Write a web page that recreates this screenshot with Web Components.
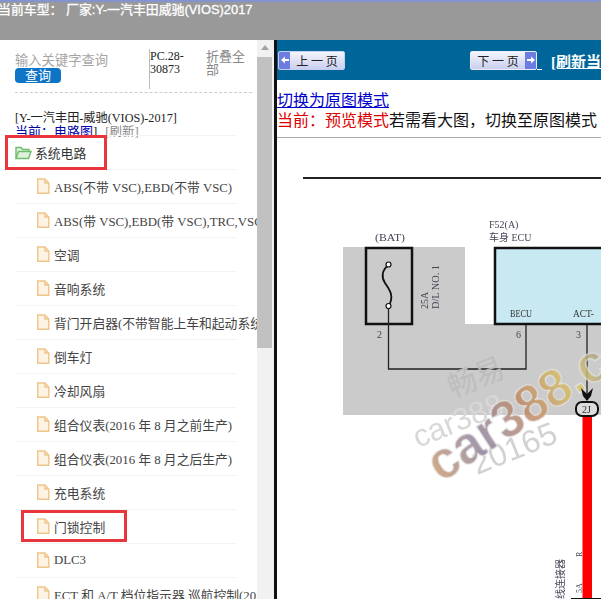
<!DOCTYPE html>
<html lang="zh"><head><meta charset="utf-8"><title>车型</title>
<style>
html,body{margin:0;padding:0;height:599px;overflow:hidden;background:#fff}
body{font:13px "Liberation Serif","Noto Sans CJK SC",serif}
</style></head><body>
<app-shell>
  <top-bar slot="top">当前车型： 厂家:Y-一汽丰田威驰(VIOS)2017</top-bar>
  <side-panel slot="side"></side-panel>
  <doc-view slot="main"></doc-view>
</app-shell>
<script>
const FILE=`<svg width="14" height="17" viewBox="0 0 14 17" fill="#fdf3e2" stroke="#f0c48c" stroke-width="1.4"><path d="M1.7 1h7.2l3.900 4v10.300H1.700z"/><path d="M8.900 1v4h3.900" fill="none"/></svg>`;
const FOLDER=`<svg width="17" height="15" viewBox="0 0 17 15" fill="none" stroke="#6fbb6c" stroke-width="1.4"><path d="M1 13V2.500h5l1.500 2H14V6.500" fill="#e3f3e0"/><path d="M1 13.500 3.500 6.500H16l-2.500 7z" fill="#dff1dc"/></svg>`;
function def(name,html,init){customElements.define(name,class extends HTMLElement{constructor(){super();this.attachShadow({mode:'open'}).innerHTML=html}connectedCallback(){init&&init(this)}})}

def('app-shell',`<style>
:host{display:grid;grid-template-columns:274px 327px;grid-template-rows:40px 559px;width:601px;height:599px;overflow:hidden}
.t{grid-column:1/3;min-width:0}.s,.m{min-width:0;min-height:0;overflow:hidden}
</style><div class="t"><slot name="top"></slot></div><div class="s"><slot name="side"></slot></div><div class="m"><slot name="main"></slot></div>`);

def('top-bar',`<style>
:host{display:block;height:40px;box-sizing:border-box;background:#999;border-top:2px solid #8492cf;color:#fff;font:12.9px/16px "Liberation Sans","Noto Sans CJK SC",sans-serif;white-space:nowrap;overflow:hidden}
span{display:block;margin-left:-2px;-webkit-text-stroke:.3px #fff}
</style><span><slot></slot></span>`);

def('tree-row',`<style>
:host{display:flex;align-items:center;gap:4px;height:34px;box-sizing:border-box;margin-left:16px;width:221px;padding-left:20px;border-bottom:1px solid #f4f4f4;color:#444;font-size:12.8px;white-space:nowrap}
:host([root]){padding:0 0 1px;height:35px;margin-left:15px;width:222px;color:#333;gap:3px;border-top:1px solid #f4f4f4}
.i{display:flex;flex:none}
</style><span class="i"></span><span class="l"><slot></slot></span>`,el=>{el.shadowRoot.querySelector('.i').innerHTML=el.hasAttribute('root')?FOLDER:FILE});

def('mark-box',`<style>
:host{display:block;position:absolute;border:3px solid #e8363c;box-sizing:border-box;pointer-events:none}
</style>`);

def('side-panel',`<style>
:host{display:flex;height:559px;background:#fff;overflow:hidden}
.c{width:257px;flex:none;overflow:hidden}
.head{display:grid;grid-template-columns:134px 57px 50px;margin:9px 0 0 15px;width:237px;border-bottom:1px dashed #ccc;box-sizing:border-box;height:44px;color:#888}
.q{font-size:13.3px;line-height:18px;padding-top:3px;color:#a5a5a5}
.btn{display:block;width:46px;height:15px;line-height:15px;background:#0d74c6;color:#fff;border-radius:4px;text-align:center;font-size:13px;margin-top:-2px}
.pc{border-left:1px solid #bbb;color:#222;font-size:12px;line-height:13px;height:40px;box-sizing:border-box;padding-top:1px}
.fold{font-size:13px;line-height:13px;color:#888;padding:1px 0 0 0}
.info{margin:19px 0 0 15px;font-size:12.2px;line-height:13px;color:#222;white-space:nowrap;height:23px}
.l2{font-size:13px}
.info a{color:#00a;text-decoration:underline}
.info i{font-style:normal;color:#888;margin-left:8px;font-size:12.5px}
.list{position:relative}
mark-box.a{left:5px;top:0;width:102px;height:35px}
mark-box.b{left:21px;top:375px;width:106px;height:32px}
.bar{width:17px;flex:none;background:#f1f1f1;position:relative}
.bar:before{content:"";display:block;margin:5px 0 0 4px;width:0;border:4px solid transparent;border-top:0;border-bottom:5px solid #a3a3a3}
.th{position:absolute;left:0;right:2px;top:17px;height:291px;background:#c1c1c1}
</style>
<div class="c">
  <div class="head">
    <div class="q">输入关键字查询<span class="btn">查询</span></div>
    <div class="pc">PC.28-<br>30873</div>
    <div class="fold">折叠全部</div>
  </div>
  <div class="info">[Y-一汽丰田-威驰(VIOS)-2017]<br><span class="l2"><a>当前：电路图</a>]<i>[刷新]</i></span></div>
  <div class="list">
    <tree-row root>系统电路</tree-row>
    <tree-row>ABS(不带 VSC),EBD(不带 VSC)</tree-row>
    <tree-row>ABS(带 VSC),EBD(带 VSC),TRC,VSC</tree-row>
    <tree-row>空调</tree-row>
    <tree-row>音响系统</tree-row>
    <tree-row>背门开启器(不带智能上车和起动系统)</tree-row>
    <tree-row>倒车灯</tree-row>
    <tree-row>冷却风扇</tree-row>
    <tree-row>组合仪表(2016 年 8 月之前生产)</tree-row>
    <tree-row>组合仪表(2016 年 8 月之后生产)</tree-row>
    <tree-row>充电系统</tree-row>
    <tree-row>门锁控制</tree-row>
    <tree-row>DLC3</tree-row>
    <tree-row>ECT 和 A/T 档位指示器 巡航控制(2016)</tree-row>
    <mark-box class="a"></mark-box>
    <mark-box class="b"></mark-box>
  </div>
</div>
<div class="bar"><div class="th"></div></div>`);

def('nav-btn',`<style>
:host{display:inline-flex;flex:none;align-items:center;width:67px;height:19px;box-sizing:border-box;border:1px solid #c4cff2;border-radius:2px;background:linear-gradient(#f4f5fc,#c9cfee);font:12px "Noto Sans CJK SC",sans-serif;color:#222;overflow:hidden}
:host([next]){flex-direction:row-reverse;border-color:#e8ecfb}
b{flex:none;display:flex;align-items:center;justify-content:center;width:11px;height:100%;background:#6c7ce0}
span{flex:1;text-align:center;white-space:nowrap}
</style><b></b><span><slot></slot></span>`,el=>{const n=el.hasAttribute('next');el.shadowRoot.querySelector('b').innerHTML=`<svg width="8" height="8" viewBox="0 0 8 8" fill="#fff"><path d="${n?'M0 3h4V0.500L8 4 4 7.500V5H0z':'M8 3H4V0.500L0 4l4 3.500V5h4z'}"/></svg>`});

def('circuit-figure',`<style>
:host{display:block;width:324px;height:461px;overflow:hidden}
svg{display:block}
text{font-family:"Liberation Serif","Noto Sans CJK SC",serif}
.s{font-family:"Liberation Sans",sans-serif}
</style>
<svg width="324" height="461" viewBox="277 138 324 461">
  <defs>
    <linearGradient id="w" x1="0" y1="0" x2="1" y2="0">
      <stop offset="0" stop-color="#c89a72"/><stop offset=".2" stop-color="#8f84a0"/><stop offset=".4" stop-color="#c08a66"/><stop offset=".6" stop-color="#d8c86a"/><stop offset=".8" stop-color="#8f84a0"/><stop offset="1" stop-color="#c0946e"/>
    </linearGradient>
    <filter id="b" x="-5%" y="-5%" width="110%" height="110%"><feGaussianBlur stdDeviation=".35"/></filter>
  </defs>
  <rect x="303" y="177" width="298" height="2" fill="#222"/>
  <path d="M343 247h122v77h136V415H343z" fill="#cbcbcb"/>
  <rect x="366" y="248" width="46" height="76" fill="#cbcbcb" stroke="#111" stroke-width="2.500"/>
  <rect x="495" y="248" width="120" height="76" fill="#c8e8f2" stroke="#111" stroke-width="2.500"/>
  <path d="M388.500 265C382 270 381 277 385 283S395 296 388.500 306" fill="none" stroke="#111" stroke-width="1.800"/>
  <circle cx="388.500" cy="264.500" r="2.500" fill="#fff" stroke="#111" stroke-width="1.200"/>
  <circle cx="388.500" cy="306" r="2.500" fill="#fff" stroke="#111" stroke-width="1.200"/>
  <path d="M388.500 308v61H526V325M587 325V396" fill="none" stroke="#222" stroke-width="1.300"/>
  <g fill="#445" font-size="10" filter="url(#b)">
    <text x="375" y="241" textLength="30" lengthAdjust="spacingAndGlyphs">(BAT)</text>
    <text x="489" y="228">F52(A)</text>
    <text x="489" y="241">车身 ECU</text>
    <text x="510" y="317" fill="#333" textLength="22" lengthAdjust="spacingAndGlyphs">BECU</text>
    <text x="573" y="317" fill="#333" textLength="21" lengthAdjust="spacingAndGlyphs">ACT-</text>
    <text x="377" y="338">2</text><text x="516" y="338">6</text><text x="576" y="338">3</text>
    <text transform="translate(428 309) rotate(-90)">25A</text>
    <text transform="translate(439 309) rotate(-90)" textLength="44" lengthAdjust="spacingAndGlyphs">D/L NO. 1</text>
    <text transform="translate(582 557) rotate(-90)" font-size="8">R</text>
    <text transform="translate(582 593) rotate(-90)" font-size="8">5A</text>
    <text transform="translate(564 599) rotate(-90)">线连接器</text>
  </g>
  <rect x="582.500" y="416" width="9.500" height="183" fill="#f00"/>
  <rect x="571" y="598" width="30" height="2" fill="#111"/>
  <text class="s" transform="translate(418 448) rotate(-22)" font-size="31" fill="#d8d8d8">car388.</text>
  <text class="s" transform="translate(477 475) rotate(-22)" font-size="32" fill="#d2d2d2">20165</text>
  <text transform="translate(453 398) rotate(-22)" font-size="29" fill="#bcbcbc" filter="url(#b)">畅易</text>
  <text class="s" transform="translate(441 483) rotate(-33)" font-size="51" font-weight="700" fill="url(#w)" fill-opacity=".85" stroke="#e8e8e8" stroke-width=".9" filter="url(#b)">car388.com</text>
  <rect x="576" y="402" width="22" height="14" rx="6" fill="#ddd" stroke="#111" stroke-width="2"/>
  <text x="582" y="413" font-size="10" fill="#333">2J</text>
  <path d="M581 388l6 6 6-6-2 8-4 5-4-5z" fill="#111"/>
</svg>`);

def('doc-view',`<style>
:host{display:block;height:559px;background:#fff;border-left:3px solid #111;box-sizing:border-box;overflow:hidden;width:327px}
.nav{display:flex;align-items:center;height:40px;background:#069;color:#fff;font-weight:700;font-size:15px;white-space:nowrap;overflow:hidden}
.l{margin-left:1px}.r{margin-left:125px}
.u{width:5px;height:15px;margin-top:4px;border-bottom:1px solid #fff;flex:none}
.ref{margin-left:9px;text-decoration:underline;flex:none}
.msg{height:58px;box-sizing:border-box;padding-top:11px;border-bottom:1px solid #aaa;font-size:16px;line-height:20px;white-space:nowrap;color:#111;overflow:hidden}
a{color:#00c;text-decoration:underline;display:block;width:max-content}
em{font-style:normal;color:#d00}
</style>
<div class="nav"><nav-btn class="l">上 一 页</nav-btn><nav-btn class="r" next>下 一 页</nav-btn><i class="u"></i><span class="ref">[刷新当前页]</span></div>
<div class="msg"><a>切换为原图模式</a><em>当前：预览模式</em>若需看大图，切换至原图模式</div>
<circuit-figure></circuit-figure>`);
</script>
</body></html>
